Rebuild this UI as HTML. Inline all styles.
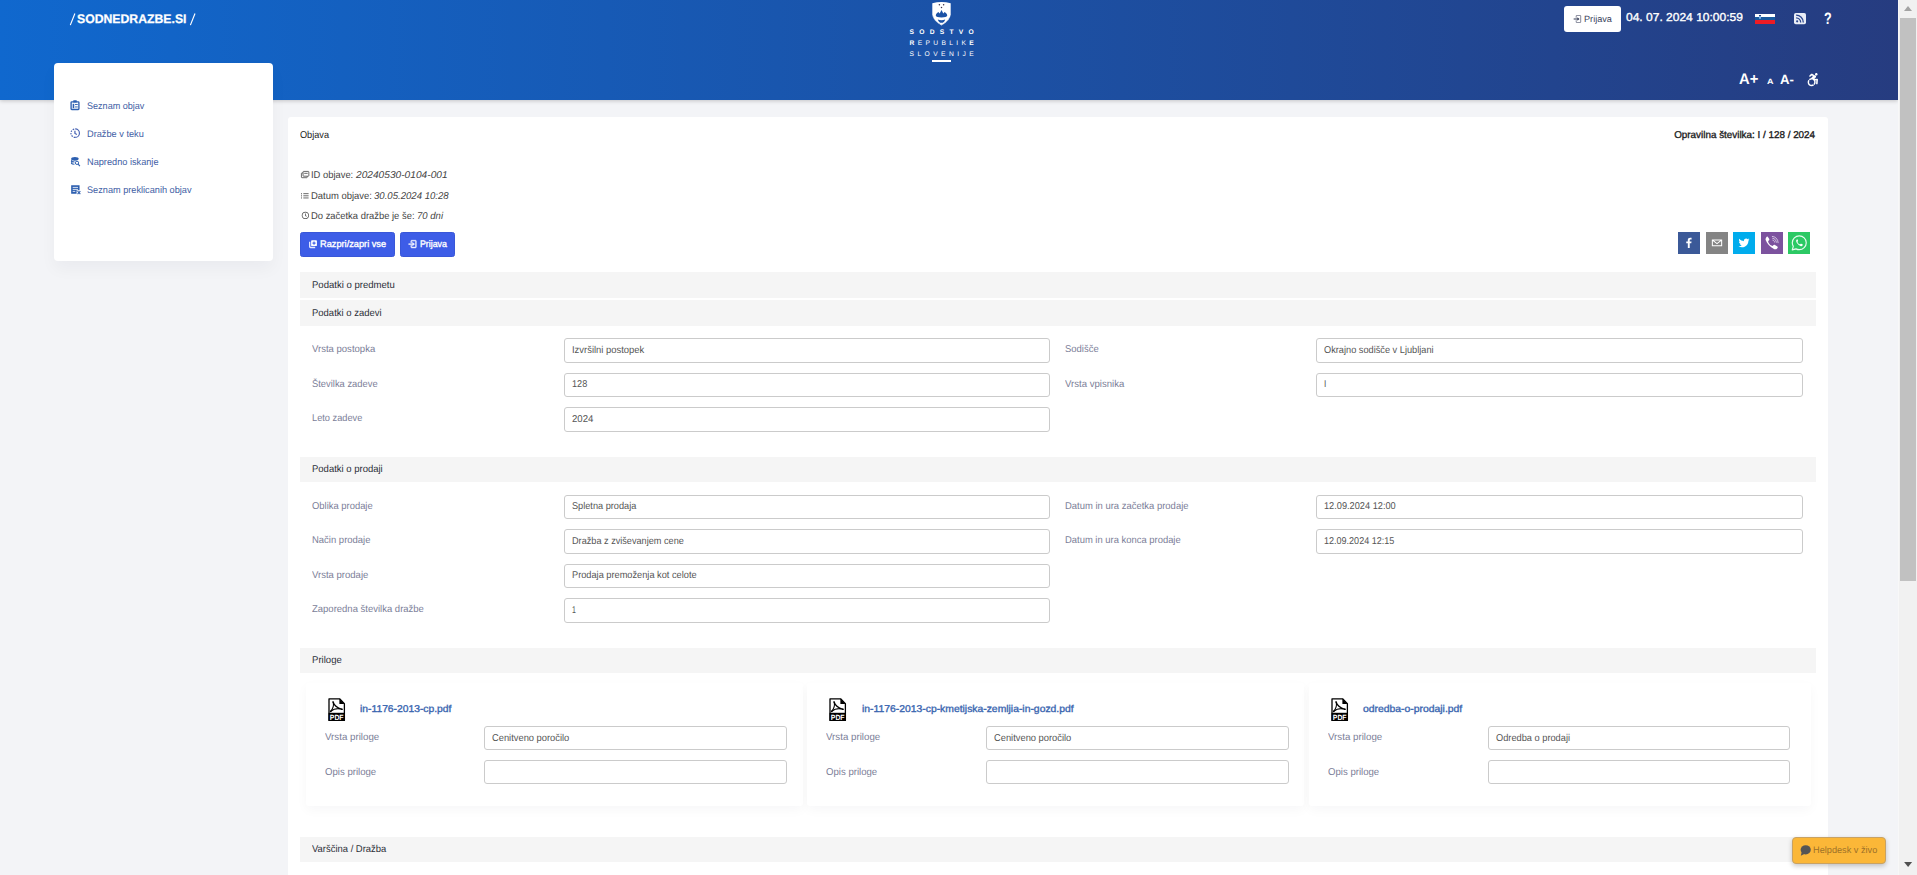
<!DOCTYPE html><html><head><meta charset="utf-8"><title>sodnedrazbe</title><style>*{box-sizing:border-box;margin:0;padding:0}
html,body{width:1917px;height:875px;overflow:hidden;background:#f3f4f7;font-family:"Liberation Sans",sans-serif;font-size:9.9px;color:#333;text-rendering:geometricPrecision}
.abs{position:absolute}
#hdr{position:absolute;left:0;top:0;width:1898px;height:100px;background:linear-gradient(90deg,#1068ce 0%,#263c80 100%);box-shadow:0 1px 4px rgba(0,0,0,.2)}
#sb{position:absolute;left:1898px;top:0;width:19px;height:875px;background:#f1f1f1;border-left:1px solid #f8f8f8}
#sb .th{position:absolute;left:1px;top:18px;width:16px;height:563px;background:#c1c1c1}
#side{position:absolute;left:54px;top:63px;width:219px;height:198px;background:#fff;border-radius:4px;box-shadow:0 8px 16px rgba(18,38,63,.04)}
#main{position:absolute;left:288px;top:117px;width:1540px;height:780px;background:#fff;border-radius:3px}
.t{position:absolute;white-space:nowrap;line-height:1;transform-origin:0 50%}
.sh{position:absolute;left:300px;width:1516px;background:#f5f5f5}
.in{position:absolute;background:#fff;border:1px solid #cbcbcb;border-radius:3px}
.lab{color:#7b7e98}
.val{color:#555}
.nav{color:#4260a5}
svg{position:absolute;overflow:visible}
</style></head><body>
<div id="hdr"></div>
<div id="sb"><div class="th"></div></div>
<div id="main"></div>
<div id="side"></div>
<div class="t " style="top:13px;font-size:12.4px;left:77.00px;color:#fff;font-weight:bold;-webkit-text-stroke:0.25px;transform:scaleX(0.9879);">SODNEDRAZBE.SI</div>
<svg style="left:69px;top:12px" width="130" height="15" viewBox="0 0 130 15"><path d="M1.3,13.1 L5.9,1.5 M121.4,13.1 L126,1.5" stroke="#fff" stroke-width="1.15" fill="none"/></svg>
<div class="t nav" style="top:102px;font-size:9.5px;left:86.60px;transform:scaleX(0.9534);">Seznam objav</div>
<div class="t nav" style="top:130px;font-size:9.5px;left:86.60px;transform:scaleX(0.9689);">Dražbe v teku</div>
<div class="t nav" style="top:158px;font-size:9.5px;left:86.60px;transform:scaleX(0.9670);">Napredno iskanje</div>
<div class="t nav" style="top:186px;font-size:9.5px;left:86.60px;transform:scaleX(0.9652);">Seznam preklicanih objav</div>
<div class="t " style="top:131px;font-size:9.9px;left:299.80px;color:#222;transform:scaleX(0.9266);">Objava</div>
<div class="t " style="top:131px;font-size:9.9px;right:101.60px;transform-origin:100% 50%;color:#222;-webkit-text-stroke:0.35px;transform:scaleX(0.9987);">Opravilna številka: I / 128 / 2024</div>
<div class="t " style="top:171px;font-size:9.9px;left:310.80px;color:#444;transform:scaleX(0.9490);">ID objave:</div>
<div class="t " style="top:171px;font-size:9.9px;left:355.50px;color:#444;transform:scaleX(1.0296);"><i>20240530-0104-001</i></div>
<div class="t " style="top:192px;font-size:9.9px;left:310.80px;color:#444;transform:scaleX(0.9565);">Datum objave:</div>
<div class="t " style="top:192px;font-size:9.9px;left:374.30px;color:#444;transform:scaleX(0.9715);"><i>30.05.2024 10:28</i></div>
<div class="t " style="top:212px;font-size:9.9px;left:310.80px;color:#444;transform:scaleX(0.9523);">Do začetka dražbe je še:</div>
<div class="t " style="top:212px;font-size:9.9px;left:417.00px;color:#444;transform:scaleX(0.9663);"><i>70 dni</i></div>
<div class="abs" style="left:300.2px;top:232.4px;width:94.8px;height:24.4px;background:#3d5de7;border:1px solid #3957d8;border-radius:2.5px"></div>
<div class="abs" style="left:400.3px;top:232.4px;width:54.4px;height:24.4px;background:#3d5de7;border:1px solid #3957d8;border-radius:2.5px"></div>
<div class="t " style="top:240px;font-size:9.5px;left:319.60px;color:#fff;-webkit-text-stroke:0.35px;transform:scaleX(0.9705);">Razpri/zapri vse</div>
<div class="t " style="top:240px;font-size:9.5px;left:420.00px;color:#fff;-webkit-text-stroke:0.35px;transform:scaleX(0.9261);">Prijava</div>
<div class="sh" style="top:272px;height:26px"></div>
<div class="t " style="top:281px;font-size:9.9px;left:312.30px;color:#2b2f38;transform:scaleX(0.9668);">Podatki o predmetu</div>
<div class="sh" style="top:300px;height:26px"></div>
<div class="t " style="top:309px;font-size:9.9px;left:312.30px;color:#2b2f38;transform:scaleX(0.9604);">Podatki o zadevi</div>
<div class="t lab" style="top:345px;font-size:9.9px;left:312.40px;transform:scaleX(0.9647);">Vrsta postopka</div>
<div class="in" style="left:564px;top:338px;width:486px;height:25px"></div>
<div class="t val" style="top:346px;font-size:9.9px;left:571.70px;transform:scaleX(0.9545);">Izvršilni postopek</div>
<div class="t lab" style="top:345px;font-size:9.9px;left:1064.80px;transform:scaleX(0.9590);">Sodišče</div>
<div class="in" style="left:1316px;top:338px;width:487px;height:25px"></div>
<div class="t val" style="top:346px;font-size:9.9px;left:1324.30px;transform:scaleX(0.9330);">Okrajno sodišče v Ljubljani</div>
<div class="t lab" style="top:380px;font-size:9.9px;left:312.40px;transform:scaleX(0.9484);">Številka zadeve</div>
<div class="in" style="left:564px;top:373px;width:486px;height:24px"></div>
<div class="t val" style="top:380px;font-size:9.9px;left:571.70px;transform:scaleX(0.9221);">128</div>
<div class="t lab" style="top:380px;font-size:9.9px;left:1064.80px;transform:scaleX(0.9704);">Vrsta vpisnika</div>
<div class="in" style="left:1316px;top:373px;width:487px;height:24px"></div>
<div class="t val" style="top:380px;font-size:9.9px;left:1324.30px;transform:scaleX(0.8364);">I</div>
<div class="t lab" style="top:414px;font-size:9.9px;left:312.40px;transform:scaleX(0.9347);">Leto zadeve</div>
<div class="in" style="left:564px;top:407px;width:486px;height:25px"></div>
<div class="t val" style="top:415px;font-size:9.9px;left:571.70px;transform:scaleX(0.9741);">2024</div>
<div class="sh" style="top:457px;height:25px"></div>
<div class="t " style="top:465px;font-size:9.9px;left:312.30px;color:#2b2f38;transform:scaleX(0.9611);">Podatki o prodaji</div>
<div class="t lab" style="top:502px;font-size:9.9px;left:312.40px;transform:scaleX(0.9531);">Oblika prodaje</div>
<div class="in" style="left:564px;top:495px;width:486px;height:24px"></div>
<div class="t val" style="top:502px;font-size:9.9px;left:571.80px;transform:scaleX(0.9294);">Spletna prodaja</div>
<div class="t lab" style="top:502px;font-size:9.9px;left:1064.80px;transform:scaleX(0.9574);">Datum in ura začetka prodaje</div>
<div class="in" style="left:1316px;top:495px;width:487px;height:24px"></div>
<div class="t val" style="top:502px;font-size:9.9px;left:1324.30px;transform:scaleX(0.9325);">12.09.2024 12:00</div>
<div class="t lab" style="top:536px;font-size:9.9px;left:312.40px;transform:scaleX(0.9600);">Način prodaje</div>
<div class="in" style="left:564px;top:529px;width:486px;height:25px"></div>
<div class="t val" style="top:537px;font-size:9.9px;left:571.80px;transform:scaleX(0.9259);">Dražba z zviševanjem cene</div>
<div class="t lab" style="top:536px;font-size:9.9px;left:1064.80px;transform:scaleX(0.9537);">Datum in ura konca prodaje</div>
<div class="in" style="left:1316px;top:529px;width:487px;height:25px"></div>
<div class="t val" style="top:537px;font-size:9.9px;left:1324.30px;transform:scaleX(0.9143);">12.09.2024 12:15</div>
<div class="t lab" style="top:571px;font-size:9.9px;left:312.40px;transform:scaleX(0.9645);">Vrsta prodaje</div>
<div class="in" style="left:564px;top:564px;width:486px;height:24px"></div>
<div class="t val" style="top:571px;font-size:9.9px;left:571.80px;transform:scaleX(0.9341);">Prodaja premoženja kot celote</div>
<div class="t lab" style="top:605px;font-size:9.9px;left:312.40px;transform:scaleX(0.9615);">Zaporedna številka dražbe</div>
<div class="in" style="left:564px;top:598px;width:486px;height:25px"></div>
<div class="t val" style="top:606px;font-size:9.9px;left:571.80px;transform:scaleX(0.7091);">1</div>
<div class="sh" style="top:648px;height:25px"></div>
<div class="t " style="top:656px;font-size:9.9px;left:312.30px;color:#2b2f38;transform:scaleX(0.9691);">Priloge</div>
<div class="abs" style="left:305.5px;top:683px;width:497.3px;height:123px;background:#fff;border-radius:3px;box-shadow:0 4px 12px rgba(18,38,63,.035)"></div>
<div class="t " style="top:705px;font-size:9.9px;left:359.80px;color:#3a66b0;-webkit-text-stroke:0.35px;transform:scaleX(1.0427);">in-1176-2013-cp.pdf</div>
<div class="t lab" style="top:733px;font-size:9.9px;left:324.70px;transform:scaleX(0.9841);">Vrsta priloge</div>
<div class="t lab" style="top:768px;font-size:9.9px;left:324.70px;transform:scaleX(0.9715);">Opis priloge</div>
<div class="in" style="left:484px;top:726px;width:303px;height:24px"></div>
<div class="t val" style="top:734px;font-size:9.9px;left:492.10px;transform:scaleX(0.9450);">Cenitveno poročilo</div>
<div class="in" style="left:484px;top:760px;width:303px;height:24px"></div>
<div class="abs" style="left:807.2px;top:683px;width:497.3px;height:123px;background:#fff;border-radius:3px;box-shadow:0 4px 12px rgba(18,38,63,.035)"></div>
<div class="t " style="top:705px;font-size:9.9px;left:861.50px;color:#3a66b0;-webkit-text-stroke:0.35px;transform:scaleX(1.0486);">in-1176-2013-cp-kmetijska-zemljia-in-gozd.pdf</div>
<div class="t lab" style="top:733px;font-size:9.9px;left:826.40px;transform:scaleX(0.9841);">Vrsta priloge</div>
<div class="t lab" style="top:768px;font-size:9.9px;left:826.40px;transform:scaleX(0.9715);">Opis priloge</div>
<div class="in" style="left:986px;top:726px;width:303px;height:24px"></div>
<div class="t val" style="top:734px;font-size:9.9px;left:994.10px;transform:scaleX(0.9450);">Cenitveno poročilo</div>
<div class="in" style="left:986px;top:760px;width:303px;height:24px"></div>
<div class="abs" style="left:1309px;top:683px;width:501.5px;height:123px;background:#fff;border-radius:3px;box-shadow:0 4px 12px rgba(18,38,63,.035)"></div>
<div class="t " style="top:705px;font-size:9.9px;left:1363.30px;color:#3a66b0;-webkit-text-stroke:0.35px;transform:scaleX(1.0504);">odredba-o-prodaji.pdf</div>
<div class="t lab" style="top:733px;font-size:9.9px;left:1328.20px;transform:scaleX(0.9841);">Vrsta priloge</div>
<div class="t lab" style="top:768px;font-size:9.9px;left:1328.20px;transform:scaleX(0.9715);">Opis priloge</div>
<div class="in" style="left:1488px;top:726px;width:302px;height:24px"></div>
<div class="t val" style="top:734px;font-size:9.9px;left:1496.10px;transform:scaleX(0.9360);">Odredba o prodaji</div>
<div class="in" style="left:1488px;top:760px;width:302px;height:24px"></div>
<div class="sh" style="top:837px;height:25px"></div>
<div class="t " style="top:845px;font-size:9.9px;left:312.30px;color:#2b2f38;transform:scaleX(0.9554);">Varščina / Dražba</div>
<div class="abs" style="left:1792.3px;top:837px;width:93.6px;height:26.5px;background:#fbb738;border:1px solid #c9a262;border-radius:4px;box-shadow:0 2px 5px rgba(0,0,0,.22)"></div>
<div class="t " style="top:846px;font-size:9.3px;left:1813.30px;color:#9d7128;transform:scaleX(0.9876);">Helpdesk v živo</div>
<svg style="left:932px;top:1.8px" width="19" height="23.6" viewBox="0 0 19 23.6" ><path d="M0.3,1.2 Q9.5,-1 18.7,1.2 L18.7,12.6 Q18.4,18.6 9.5,23.5 Q0.6,18.6 0.3,12.6 Z" fill="#fff"/><path d="M3.9,14 Q3.3,12.2 6.4,10 L7.7,11.6 L9.5,8.1 L11.3,11.6 L12.6,10 Q15.7,12.2 15.1,14 Q14.6,15.4 9.5,15.4 Q4.4,15.4 3.9,14 Z" fill="#1c53a6"/><path d="M5.8,17.4 Q9.5,19 13.2,17.4 Q12.2,20.8 9.5,20.8 Q6.8,20.8 5.8,17.4 Z" fill="#1c53a6"/><path d="M1.2,14.5 Q2.5,19.5 9.5,22.8 Q16.5,19.5 17.8,14.5" fill="none" stroke="#1c53a6" stroke-width="0.5" stroke-dasharray="1.2 1.2" opacity=".7"/><circle cx="7.4" cy="2.8" r="0.75" fill="#3a3048"/><circle cx="11.6" cy="2.8" r="0.75" fill="#3a3048"/><circle cx="9.5" cy="5.5" r="0.75" fill="#3a3048"/></svg>
<div class="abs" style="left:909.5px;top:28.6px;width:64.2px;height:7px;display:flex;justify-content:space-between;font-size:6.7px;line-height:7px;color:#fff"><span style="font-weight:bold">S</span><span style="font-weight:bold">O</span><span style="font-weight:bold">D</span><span style="font-weight:bold">S</span><span style="font-weight:bold">T</span><span style="font-weight:bold">V</span><span style="font-weight:bold">O</span></div>
<div class="abs" style="left:909.5px;top:40.0px;width:64.2px;height:7px;display:flex;justify-content:space-between;font-size:6.7px;line-height:7px;color:#fff"><span style="font-weight:bold">R</span><span style="font-weight:normal">E</span><span style="font-weight:normal">P</span><span style="font-weight:normal">U</span><span style="font-weight:normal">B</span><span style="font-weight:normal">L</span><span style="font-weight:normal">I</span><span style="font-weight:normal">K</span><span style="font-weight:bold">E</span></div>
<div class="abs" style="left:909.5px;top:50.8px;width:64.2px;height:7px;display:flex;justify-content:space-between;font-size:6.7px;line-height:7px;color:#fff"><span style="font-weight:normal">S</span><span style="font-weight:normal">L</span><span style="font-weight:normal">O</span><span style="font-weight:normal">V</span><span style="font-weight:normal">E</span><span style="font-weight:normal">N</span><span style="font-weight:normal">I</span><span style="font-weight:normal">J</span><span style="font-weight:normal">E</span></div>
<div class="abs" style="left:932.4px;top:60px;width:18.6px;height:1.8px;background:#fff"></div>
<div class="abs" style="left:1564px;top:6px;width:57px;height:26px;background:#fff;border-radius:3px"></div>
<svg style="left:1571.6px;top:13.8px" width="10" height="10" viewBox="0 0 24 24" ><path fill="#333a55" d="M13 16l5-4-5-4v3H4v2h9z"/><path fill="#6d7186" d="M20 3h-9c-1.103 0-2 .897-2 2v4h2V5h9v14h-9v-4H9v4c0 1.103.897 2 2 2h9c1.103 0 2-.897 2-2V5c0-1.103-.897-2-2-2z"/></svg>
<div class="t " style="top:15px;font-size:9.1px;left:1583.70px;color:#3a3f5c;transform:scaleX(1.0037);">Prijava</div>
<div class="t " style="top:13px;font-size:11.5px;left:1625.90px;color:#fff;-webkit-text-stroke:0.35px;transform:scaleX(1.0446);">04. 07. 2024 10:00:59</div>
<div class="abs" style="left:1755px;top:14px;width:20.4px;height:10.2px;background:linear-gradient(180deg,#fff 0,#fff 33.3%,#1a5a9e 33.3%,#1a5a9e 64%,#ed1c24 64%,#ed1c24 100%)"></div>
<div class="abs" style="left:1758.8px;top:15.3px;width:2.6px;height:3.4px;background:#7fb4e6;border-radius:0 0 1.3px 1.3px;border-top:1px solid #24407f"></div>
<svg style="left:1794px;top:13px" width="12" height="11.3" viewBox="0 0 24 22.6" ><rect x="0" y="0" width="24" height="22.6" rx="3.5" fill="#e9edf6"/><circle cx="6.3" cy="16.6" r="2.2" fill="#2b468f"/><path d="M4.2,9.6 A9.2,9.2 0 0 1 13.4,18.8 M4.2,4.4 A14.4,14.4 0 0 1 18.6,18.8" fill="none" stroke="#2b468f" stroke-width="2.6"/></svg>
<div class="t " style="top:11px;font-size:16.6px;left:1823.50px;color:#fff;font-weight:bold;transform:scaleX(0.7593);">?</div>
<div class="t " style="top:72px;font-size:15.4px;left:1738.60px;color:#fff;font-weight:bold;transform:scaleX(0.9598);">A+</div>
<div class="t " style="top:78px;font-size:7.6px;left:1766.70px;color:#fff;font-weight:bold;transform:scaleX(1.1852);">A</div>
<div class="t " style="top:73px;font-size:13.4px;left:1780.10px;color:#fff;font-weight:bold;transform:scaleX(0.9830);">A-</div>
<svg style="left:1807px;top:72.8px" width="11.6" height="13.2" viewBox="0 0 448 512" preserveAspectRatio="none"><path fill="#fff" d="M423.9 255.8L411 413.1c-3.3 40.7-63.9 35.1-60.6-4.9l10-122.5-41.1 2.3c10.1 20.7 15.8 43.9 15.8 68.5 0 41.2-16.1 78.7-42.3 106.5l-39.3-39.3c57.9-63.7 13.1-167.2-74-167.2-25.9 0-49.5 9.9-67.2 26L73 243.2c22-20.7 50.1-35.1 81.4-40.2l75.3-85.7-42.6-24.8-51.6 46c-30 26.8-70.6-18.5-40.5-45.4l68-60.7c9.8-8.8 24.1-10.2 35.5-3.6 0 0 139.3 80.9 139.5 81.1 16.2 10.1 20.7 36 6.1 52.6L285.7 229l106.1-5.9c18.5-1.1 33.6 14.4 32.1 32.7zm-64.9-154c28.1 0 50.9-22.8 50.9-50.9C409.9 22.8 387.1 0 359 0c-28.1 0-50.9 22.8-50.9 50.9 0 28.1 22.8 50.9 50.9 50.9zM179.6 456.5c-80.6 0-127.4-90.6-82.7-156.1l-39.7-39.7C36.4 287 24 320.3 24 356.4c0 130.7 150.7 201.4 251.4 122.5l-39.7-39.7c-16 10.9-35.3 17.3-56.1 17.3z"/></svg>
<svg style="left:70px;top:100px" width="10" height="10.4" viewBox="0 0 24 25" ><rect x="2.6" y="4.4" width="18.8" height="18.4" rx="1.6" fill="none" stroke="#2d5fb0" stroke-width="3.2"/><rect x="7.8" y="0.4" width="8.4" height="5.8" rx="1" fill="#2d5fb0"/><rect x="6.4" y="9.2" width="3.8" height="10.4" fill="#2d5fb0"/><rect x="12" y="9.6" width="6.6" height="2.2" fill="#2d5fb0"/><rect x="12" y="15.6" width="6.6" height="2.2" fill="#2d5fb0"/></svg>
<svg style="left:69.6px;top:128.4px" width="10.4" height="10.4" viewBox="0 0 24 24" ><path d="M12,2.2 A9.8,9.8 0 0 1 12,21.8" fill="none" stroke="#4863b4" stroke-width="2.7"/><path d="M12,21.8 A9.8,9.8 0 0 1 12,2.2" fill="none" stroke="#4863b4" stroke-width="2.7" stroke-dasharray="3.6 2.4"/><path d="M11.4,6.2 V12.6 L16,15.2" fill="none" stroke="#4863b4" stroke-width="2.8"/></svg>
<svg style="left:71px;top:156.8px" width="9.2" height="9.6" viewBox="0 0 23 24" ><ellipse cx="9.8" cy="4.6" rx="9.4" ry="4.5" fill="#2d5fb0"/><path d="M0.6,9.6 C2,11.6 5,12.4 8.6,12.4 M0.6,15.2 C2,17.4 5,18.2 8.6,18.2" fill="none" stroke="#2d5fb0" stroke-width="3"/><path d="M1.9,6 V16" stroke="#2d5fb0" stroke-width="2.6"/><circle cx="15" cy="14.6" r="4.1" fill="none" stroke="#2d5fb0" stroke-width="2.5"/><path d="M18,17.8 L22.2,22.6" stroke="#2d5fb0" stroke-width="2.8"/></svg>
<svg style="left:70.6px;top:185.1px" width="9.6" height="9.2" viewBox="0 0 24 23" ><path d="M0.4,0.4 H21.4 V13.4 H14 V21.6 H0.4 Z" fill="#2d5fb0"/><rect x="4.2" y="4.8" width="13.4" height="2" fill="#fff"/><rect x="4.2" y="9.8" width="13.4" height="2" fill="#fff"/><rect x="4.2" y="14.8" width="6.6" height="2" fill="#fff"/><path d="M16.4,15.4 L23.4,22.6 M23.4,15.4 L16.4,22.6" stroke="#2d5fb0" stroke-width="2.7"/></svg>
<svg style="left:301px;top:171px" width="8.2" height="7.2" viewBox="0 0 24 21" ><rect x="1.2" y="5.6" width="17" height="14" rx="1.5" fill="none" stroke="#4a4a4a" stroke-width="2.4"/><rect x="6" y="1.2" width="17" height="14" rx="1.5" fill="#fff" stroke="#4a4a4a" stroke-width="2.4"/><path d="M9.4,6.8 H19.6" stroke="#4a4a4a" stroke-width="2.4"/></svg>
<svg style="left:301px;top:192.8px" width="7.6" height="5.6" viewBox="0 0 24 17.6" ><path d="M7.4,2 H24 M7.4,8.8 H24 M7.4,15.6 H24" stroke="#4a4a4a" stroke-width="2.6"/><path d="M1.6,0 V4.4 M1.6,6.8 V11 M1.6,13.4 V17.6" stroke="#4a4a4a" stroke-width="2.2"/></svg>
<svg style="left:300.5px;top:211px" width="8.8" height="8.8" viewBox="0 0 24 24" ><path fill="#4a4a4a" d="M12 2C6.486 2 2 6.486 2 12s4.486 10 10 10 10-4.486 10-10S17.514 2 12 2zm0 18c-4.411 0-8-3.589-8-8s3.589-8 8-8 8 3.589 8 8-3.589 8-8 8z"/><path fill="#4a4a4a" d="M13 7h-2v5.414l3.293 3.293 1.414-1.414L13 11.586z"/></svg>
<svg style="left:309.2px;top:239.8px" width="8" height="8.2" viewBox="0 0 22 22.5" ><rect x="5.8" y="0.4" width="16" height="16.4" rx="2.4" fill="#fff"/><path d="M13.8,4.4 V12.8 M9.6,8.6 H18" stroke="#3d5de7" stroke-width="2.8"/><path d="M1.9,5 V18.4 Q1.9,20.6 4.1,20.6 H17" fill="none" stroke="#e6e9ff" stroke-width="3.6"/></svg>
<svg style="left:407.3px;top:238.9px" width="10.2" height="10.2" viewBox="0 0 24 24" ><path fill="#fff" stroke="#fff" stroke-width="1.1" d="M13 16l5-4-5-4v3H4v2h9z"/><path fill="#eef0ff" stroke="#eef0ff" stroke-width="1.1" d="M20 3h-9c-1.103 0-2 .897-2 2v4h2V5h9v14h-9v-4H9v4c0 1.103.897 2 2 2h9c1.103 0 2-.897 2-2V5c0-1.103-.897-2-2-2z"/></svg>
<div class="abs" style="left:1678.1px;top:232.1px;width:22px;height:21.7px;background:#3b5998"></div>
<svg style="left:1678.1px;top:232.1px" width="22" height="21.7" viewBox="0 0 64 64" preserveAspectRatio="none"><path d="M34.1,47V33.3h4.6l0.7-5.3h-5.3v-3.4c0-1.5,0.4-2.6,2.6-2.6l2.8,0v-4.8c-0.5-0.1-2.2-0.2-4.1-0.2c-4.1,0-6.9,2.5-6.9,7V28H24v5.3h4.6V47H34.1z" fill="#fff"/></svg>
<div class="abs" style="left:1706px;top:232.1px;width:22px;height:21.7px;background:#848484"></div>
<svg style="left:1706px;top:232.1px" width="22" height="21.7" viewBox="0 0 64 64" preserveAspectRatio="none"><path d="M17,22v20h30V22H17z M41.1,25L32,32.1L22.9,25H41.1z M20,39V26.6l12,9.3l12-9.3V39H20z" fill="#fff"/></svg>
<div class="abs" style="left:1733.2px;top:232.1px;width:22px;height:21.7px;background:#00aced"></div>
<svg style="left:1733.2px;top:232.1px" width="22" height="21.7" viewBox="0 0 64 64" preserveAspectRatio="none"><path d="M48,22.1c-1.2,0.5-2.4,0.9-3.8,1c1.4-0.8,2.4-2.1,2.9-3.6c-1.3,0.8-2.7,1.3-4.2,1.6C41.7,19.8,40,19,38.2,19c-3.6,0-6.6,2.9-6.6,6.6c0,0.5,0.1,1,0.2,1.5c-5.5-0.3-10.3-2.9-13.5-6.9c-0.6,1-0.9,2.1-0.9,3.3c0,2.3,1.2,4.3,2.9,5.5c-1.1,0-2.1-0.3-3-0.8c0,0,0,0.1,0,0.1c0,3.2,2.3,5.8,5.3,6.4c-0.6,0.1-1.1,0.2-1.7,0.2c-0.4,0-0.8,0-1.2-0.1c0.8,2.6,3.3,4.5,6.1,4.6c-2.2,1.8-5.1,2.8-8.2,2.8c-0.5,0-1.1,0-1.6-0.1c2.9,1.9,6.4,2.9,10.1,2.9c12.1,0,18.7-10,18.7-18.7c0-0.3,0-0.6,0-0.8C46,24.5,47.1,23.4,48,22.1z" fill="#fff"/></svg>
<div class="abs" style="left:1761px;top:232.1px;width:22px;height:21.7px;background:#7c529e"></div>
<svg style="left:1761px;top:232.1px" width="22" height="21.7" viewBox="0 0 64 64" preserveAspectRatio="none"><path d="M14.5,17.5 C13,19.5 12.6,21.5 13.6,23.6 C17.2,33.6 25.5,44.6 38.8,50.6 C41.5,52 44.5,51 46.8,48.6 C49,46.2 49.6,44.2 47.6,42.6 C45.4,40.9 43,39.2 40.6,38 C38.6,37 37,37.6 35.8,39.2 C34.2,41.4 32.6,41.4 30.4,40.2 C25.6,37.6 22.6,34 21,29.4 C20.4,27.6 20.8,26.4 22.4,25.2 C24.4,23.8 24.8,22.2 23.6,20 C22.4,17.8 21,15.8 19.4,14 C18,12.6 16,14.6 14.5,17.5 Z" fill="#fff"/><path d="M33,13 C43,14 49.4,21 49.8,31.6 M34,18.6 C40.6,19.6 44.2,23.8 44.6,30.4 M34.4,24 C37.6,24.6 39.2,26.6 39.4,29.6" fill="none" stroke="#e9dff2" stroke-width="2.3" stroke-linecap="round"/></svg>
<div class="abs" style="left:1788.2px;top:232.1px;width:22px;height:21.7px;background:#2cc964"></div>
<svg style="left:1788.2px;top:232.1px" width="22" height="21.7" viewBox="0 0 64 64" preserveAspectRatio="none"><path d="M32.8,11.6 C21.6,11.6 12.5,20.6 12.5,31.8 C12.5,35.6 13.5,39.2 15.4,42.2 L12.4,52.6 L23.2,49.8 C26.1,51.4 29.4,52.2 32.8,52.2 C44,52.2 53.1,43.1 53.1,31.9 C53.1,20.7 44,11.6 32.8,11.6 Z" fill="none" stroke="#eafaf0" stroke-width="3.4" stroke-linejoin="round"/><path d="M25.6,21.8 C24.4,22.6 23.4,24.4 23.6,26.6 C24,30.6 28.6,37.8 36.4,41.2 C39,42.3 41.6,41.6 42.6,39.2 C43.2,37.8 43,37 42,36.4 L38.6,34.6 C37.6,34.1 37,34.4 36.4,35.2 C35.4,36.6 34.8,36.8 33.4,36 C30.8,34.6 29,32.6 27.8,30 C27.4,29 27.6,28.4 28.4,27.6 C29.4,26.6 29.4,26 29,25 L27.6,22 C27.2,21.2 26.4,21.3 25.6,21.8 Z" fill="#fff"/></svg>
<svg style="left:327.9px;top:697.8px" width="17.2" height="23.2" viewBox="0 0 17.2 23.2" ><path d="M1,0.8 H11.6 L16.4,5.8 V22.4 H1 Z" fill="#fff" stroke="#000" stroke-width="1.3" stroke-linejoin="round"/><path d="M11.4,0.8 V6 H16.4 Z" fill="#000"/><rect x="0.5" y="14.8" width="16.3" height="8" fill="#000"/><path d="M5.2,4 C5.9,6.8 4.6,11 2.6,13.4 M5.2,4 C5.8,6.4 8.4,9.6 14,11.4 M2.8,13.2 C6,10.6 10,10 14,11.2" fill="none" stroke="#000" stroke-width="1.15" stroke-linecap="round"/><circle cx="5" cy="4" r="0.8"/><circle cx="2.7" cy="13.3" r="0.9"/><ellipse cx="13.8" cy="11.2" rx="1.1" ry="0.8"/><text x="8.7" y="21.9" text-anchor="middle" font-family="Liberation Sans, sans-serif" font-weight="bold" font-size="7.5" fill="#fff" textLength="13.8" lengthAdjust="spacingAndGlyphs">PDF</text></svg>
<svg style="left:829.4px;top:697.8px" width="17.2" height="23.2" viewBox="0 0 17.2 23.2" ><path d="M1,0.8 H11.6 L16.4,5.8 V22.4 H1 Z" fill="#fff" stroke="#000" stroke-width="1.3" stroke-linejoin="round"/><path d="M11.4,0.8 V6 H16.4 Z" fill="#000"/><rect x="0.5" y="14.8" width="16.3" height="8" fill="#000"/><path d="M5.2,4 C5.9,6.8 4.6,11 2.6,13.4 M5.2,4 C5.8,6.4 8.4,9.6 14,11.4 M2.8,13.2 C6,10.6 10,10 14,11.2" fill="none" stroke="#000" stroke-width="1.15" stroke-linecap="round"/><circle cx="5" cy="4" r="0.8"/><circle cx="2.7" cy="13.3" r="0.9"/><ellipse cx="13.8" cy="11.2" rx="1.1" ry="0.8"/><text x="8.7" y="21.9" text-anchor="middle" font-family="Liberation Sans, sans-serif" font-weight="bold" font-size="7.5" fill="#fff" textLength="13.8" lengthAdjust="spacingAndGlyphs">PDF</text></svg>
<svg style="left:1331.3px;top:697.8px" width="17.2" height="23.2" viewBox="0 0 17.2 23.2" ><path d="M1,0.8 H11.6 L16.4,5.8 V22.4 H1 Z" fill="#fff" stroke="#000" stroke-width="1.3" stroke-linejoin="round"/><path d="M11.4,0.8 V6 H16.4 Z" fill="#000"/><rect x="0.5" y="14.8" width="16.3" height="8" fill="#000"/><path d="M5.2,4 C5.9,6.8 4.6,11 2.6,13.4 M5.2,4 C5.8,6.4 8.4,9.6 14,11.4 M2.8,13.2 C6,10.6 10,10 14,11.2" fill="none" stroke="#000" stroke-width="1.15" stroke-linecap="round"/><circle cx="5" cy="4" r="0.8"/><circle cx="2.7" cy="13.3" r="0.9"/><ellipse cx="13.8" cy="11.2" rx="1.1" ry="0.8"/><text x="8.7" y="21.9" text-anchor="middle" font-family="Liberation Sans, sans-serif" font-weight="bold" font-size="7.5" fill="#fff" textLength="13.8" lengthAdjust="spacingAndGlyphs">PDF</text></svg>
<svg style="left:1800px;top:844.6px" width="11" height="11.2" viewBox="0 0 22 22.4" ><ellipse cx="11.4" cy="9.6" rx="10.2" ry="9.2" fill="#555"/><path d="M3.4,14 L1.6,21.6 L9.6,17.6 Z" fill="#555"/></svg>
<svg style="left:1904px;top:6px" width="8" height="5" viewBox="0 0 8 5" ><path d="M0,5 L4,0 L8,5 Z" fill="#a3a3a3"/></svg>
<svg style="left:1904px;top:862.2px" width="8.2" height="5" viewBox="0 0 8 5" ><path d="M0,0 L4,5 L8,0 Z" fill="#505050"/></svg>
</body></html>
